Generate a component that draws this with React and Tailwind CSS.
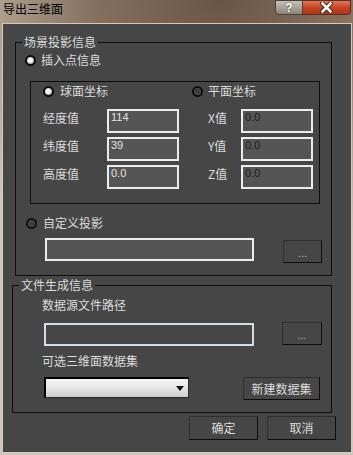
const cjk = { fontFamily: '"Noto Sans CJK SC", "Noto Sans", sans-serif' };
const num = { fontFamily: '"Liberation Sans", Arial, sans-serif' };

const Radio = ({ checked }) => (
  <span
    className={`inline-block w-[11px] h-[11px] rounded-full border-[2px] border-[#0e0e0e] shrink-0 ${
      checked
        ? 'bg-[radial-gradient(circle_at_45%_45%,#ffffff_0%,#f0f0f0_40%,#9a9a9a_80%,#4a4a4a_100%)]'
        : 'bg-[radial-gradient(circle_at_50%_50%,#3e3e3e_0%,#3e3e3e_45%,#5c5c5c_80%,#303030_100%)]'
    }`}
  />
);

const RadioRow = ({ checked, label, gap = 'gap-[5px]' }) => (
  <div className={`flex items-center h-[16px] ${gap}`}>
    <Radio checked={checked} />
    <span className="text-[12px] leading-[16px] text-[#dcdcdc]">{label}</span>
  </div>
);

const Field = ({ value, dark, className = '' }) => (
  <div
    className={`h-[24px] w-[72px] border-2 border-[#ececec] bg-[#555555] pl-[2px] text-[11px] leading-[13px] ${
      dark ? 'text-[#1c1c1c]' : 'text-[#e2e2e2]'
    } ${className}`}
    style={num}
  >
    {value}
  </div>
);

const Btn = ({ children, className = '' }) => (
  <div
    className={`flex items-center justify-center border border-t-[#2e2e2e] border-l-[#2e2e2e] border-b-[#0c0c0c] border-r-[#0c0c0c] bg-[#464646] text-[12px] text-[#dcdcdc] ${className}`}
  >
    {children}
  </div>
);

const Dots = ({ className }) => (
  <Btn className={className}>
    <span className="text-[11px] leading-none pt-[4px] text-[#b8b8c8]" style={num}>
      ...
    </span>
  </Btn>
);

const CoordRow = ({ label, value, dark, labelW }) => (
  <div className="flex items-start">
    <span className={`${labelW} text-[12px] leading-[16px] pt-[1px] text-[#dcdcdc]`}>{label}</span>
    <Field value={value} dark={dark} />
  </div>
);

export default function App() {
  return (
    <div
      className="w-[353px] h-[455px] overflow-hidden bg-[radial-gradient(ellipse_120%_70%_at_62%_0%,#6a5444_0%,#86715f_30%,#b3a493_55%,#cfc5b9_80%)]"
      style={cjk}
    >
      {/* title bar */}
      <div className="h-[23px] flex items-start justify-between">
        <span className="pl-[3px] pt-[1px] text-[12px] leading-[16px] text-black">导出三维面</span>
        <div className="flex mr-[2px]">
          <div className="w-[28px] h-[15px] rounded-bl-[4px] border border-[#4a4038] bg-[linear-gradient(#c7c0b8,#8c847c)] flex items-center justify-center text-[12px] font-bold leading-none text-white [text-shadow:0_0_2px_#333]" style={num}>
            ?
          </div>
          <div className="w-[48px] h-[15px] rounded-br-[4px] border border-l-0 border-[#5a2a1c] bg-[linear-gradient(#e07a5c,#c4401f_55%,#b23418)] flex items-center justify-center">
            <svg width="13" height="11" viewBox="0 0 13 11">
              <path d="M2.5 1.5 L10.5 9.5 M10.5 1.5 L2.5 9.5" stroke="#3a2a24" strokeWidth="4.5" strokeLinecap="square" />
              <path d="M2.5 1.5 L10.5 9.5 M10.5 1.5 L2.5 9.5" stroke="#ffffff" strokeWidth="2.5" strokeLinecap="square" />
            </svg>
          </div>
        </div>
      </div>

      {/* dialog body */}
      <div className="ml-[2px] w-[350px] h-[430px] border border-[#d6cabd] bg-[#464646] flex flex-col">
        {/* group 1 */}
        <fieldset className="mt-[11px] ml-[12px] w-[317px] border border-[#0c0c0c] pb-[12px]">
          <legend className="ml-[6px] px-[2px] text-[12px] leading-[14px] text-[#dcdcdc]">场景投影信息</legend>
          <div className="mt-[3px] pl-[9px]">
            <RadioRow checked label="插入点信息" />
          </div>

          <div className="mt-[13px] ml-[14px] w-[290px] h-[123px] border border-[#0c0c0c] flex">
            <div className="w-[161px] pl-[12px] pt-[1px] flex flex-col">
              <RadioRow checked label="球面坐标" gap="gap-[6px]" />
              <div className="mt-[10px] flex flex-col gap-[4px]">
                <CoordRow label="经度值" value="114" labelW="w-[64px]" />
                <CoordRow label="纬度值" value="39" labelW="w-[64px]" />
                <CoordRow label="高度值" value="0.0" labelW="w-[64px]" />
              </div>
            </div>
            <div className="pt-[1px] flex flex-col">
              <RadioRow label="平面坐标" />
              <div className="mt-[10px] ml-[16px] flex flex-col gap-[4px]">
                <CoordRow label="X值" value="0.0" dark labelW="w-[33px]" />
                <CoordRow label="Y值" value="0.0" dark labelW="w-[33px]" />
                <CoordRow label="Z值" value="0.0" dark labelW="w-[33px]" />
              </div>
            </div>
          </div>

          <div className="mt-[11px] pl-[10px]">
            <RadioRow label="自定义投影" gap="gap-[6px]" />
          </div>
          <div className="mt-[7px] pl-[29px] flex items-start">
            <div className="w-[209px] h-[23px] border-2 border-[#ececec] bg-[#555555]" />
            <Dots className="ml-[29px] mt-[2px] w-[39px] h-[23px]" />
          </div>
        </fieldset>

        {/* group 2 */}
        <fieldset className="mt-[2px] ml-[9px] w-[320px] border border-[#0c0c0c] pb-[12px]">
          <legend className="ml-[6px] px-[2px] text-[12px] leading-[14px] text-[#dcdcdc]">文件生成信息</legend>
          <div className="mt-[5px] pl-[29px] text-[12px] leading-[16px] text-[#dcdcdc]">数据源文件路径</div>
          <div className="mt-[9px] pl-[31px] flex items-start">
            <div className="mt-[1px] w-[210px] h-[23px] border-2 border-[#d4deea] bg-[#464646]" />
            <Dots className="ml-[28px] w-[40px] h-[23px]" />
          </div>
          <div className="mt-[7px] pl-[29px] text-[12px] leading-[16px] text-[#dcdcdc]">可选三维面数据集</div>
          <div className="mt-[8px] pl-[31px] flex items-start">
            <div className="w-[145px] h-[21px] border-t-2 border-l-2 border-b border-r border-t-black border-l-black border-b-[#2a2a2a] border-r-[#2a2a2a] bg-[linear-gradient(#f6f6f6,#e6e6e6_50%,#cdcdcd)] flex items-center justify-end pr-[4px]">
              <svg width="8" height="5" viewBox="0 0 8 5">
                <path d="M0 0 H8 L4 5 Z" fill="#111" />
              </svg>
            </div>
            <Btn className="ml-[54px] w-[77px] h-[23px]">新建数据集</Btn>
          </div>
        </fieldset>

        {/* footer buttons */}
        <div className="mt-[3px] pr-[15px] flex justify-end gap-[9px]">
          <Btn className="w-[69px] h-[24px]">确定</Btn>
          <Btn className="w-[69px] h-[24px]">取消</Btn>
        </div>
      </div>
    </div>
  );
}
